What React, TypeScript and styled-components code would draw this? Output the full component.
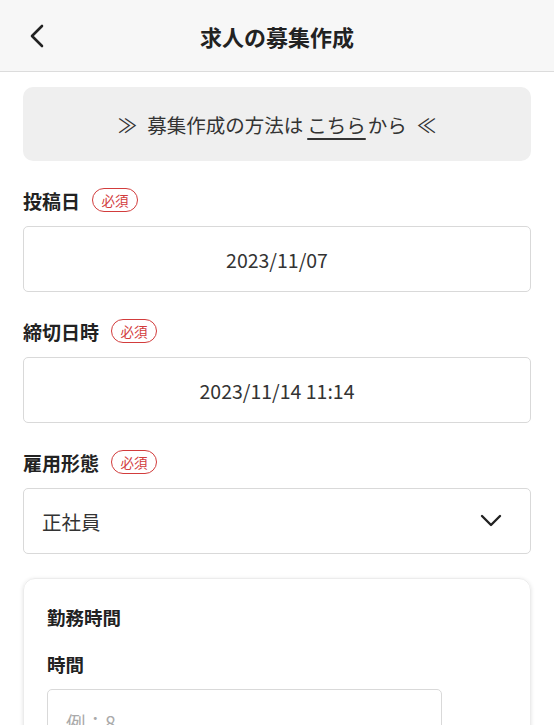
import React from "react";
import styled, { createGlobalStyle } from "styled-components";

const Global = createGlobalStyle`
  html, body { margin: 0; padding: 0; background: #fff; }
  body { font-family: "Noto Sans CJK JP", "Noto Sans", sans-serif; color: #333; }
  * { box-sizing: border-box; }
`;

const Page = styled.div`
  width: 554px;
  height: 725px;
  overflow: hidden;
`;

const Header = styled.header`
  height: 72px;
  background: #f7f7f7;
  border-bottom: 1px solid #dcdcdc;
  display: grid;
  grid-template-columns: 80px 1fr 80px;
  align-items: center;
`;

const BackButton = styled.button`
  border: 0;
  background: none;
  padding: 0 0 0 26px;
  height: 100%;
  display: flex;
  align-items: center;
  color: #222;
`;

const Title = styled.h1`
  margin: 0;
  text-align: center;
  font-size: 22px;
  font-weight: 700;
  color: #222;
`;

const Body = styled.main`
  padding: 15px 23px 0;
  display: flex;
  flex-direction: column;
`;

const Banner = styled.div`
  height: 74px;
  background: #efefef;
  border-radius: 10px;
  display: flex;
  align-items: center;
  justify-content: center;
  font-size: 19.5px;
  color: #333;
`;

const Arrow = styled.span`
  margin: 0 10px;
`;

const Link = styled.a`
  color: #333;
  text-decoration: underline;
  text-decoration-thickness: 1.5px;
  text-underline-offset: 5px;
  margin: 0 2px 0 4px;
`;

const Field = styled.section`
  margin-top: 27px;
  display: flex;
  flex-direction: column;
`;

const LabelRow = styled.div`
  display: flex;
  align-items: center;
  height: 24px;
  gap: 12px;
  margin-bottom: 14px;
`;

const Label = styled.span`
  font-size: 19px;
  font-weight: 700;
  color: #222;
`;

const Badge = styled.span`
  border: 1.5px solid #d23c3c;
  color: #d23c3c;
  border-radius: 12px;
  font-size: 13.5px;
  height: 24px;
  padding: 0 8.5px;
  display: flex;
  align-items: center;
`;

const Box = styled.div<{ $align?: "center" | "left" }>`
  height: 66px;
  border: 1px solid #d9d9d9;
  border-radius: 5px;
  display: flex;
  align-items: center;
  justify-content: ${(p) => (p.$align === "left" ? "space-between" : "center")};
  padding: ${(p) => (p.$align === "left" ? "0 28px 0 18px" : "0")};
  font-size: 19.5px;
  color: #333;
`;

const Card = styled.div`
  margin-top: 24px;
  border-radius: 12px;
  border: 1px solid #ececec;
  box-shadow: 0 1px 4px rgba(0, 0, 0, 0.12);
  padding: 20px 23px 0;
  height: 200px;
`;

const CardTitle = styled.div<{ $gap?: number }>`
  font-size: 18.5px;
  font-weight: 700;
  color: #222;
  height: 36px;
  margin-top: ${(p) => p.$gap ?? 0}px;
  display: flex;
  align-items: center;
`;

const TimeInput = styled.div`
  margin-top: 7px;
  width: 395px;
  height: 66px;
  border: 1px solid #d9d9d9;
  border-radius: 5px;
  padding: 0 0 0 18px;
  display: flex;
  align-items: center;
  font-size: 19.5px;
  color: #aaa;
`;

const Required = () => <Badge>必須</Badge>;

export default function App() {
  return (
    <Page>
      <Global />
      <Header>
        <BackButton aria-label="戻る">
          <svg width="22" height="26" viewBox="0 0 22 26" fill="none">
            <path d="M16 3 L6 13 L16 23" stroke="#222" strokeWidth="2.6" strokeLinecap="round" strokeLinejoin="round" />
          </svg>
        </BackButton>
        <Title>求人の募集作成</Title>
        <span />
      </Header>
      <Body>
        <Banner>
          <Arrow>≫</Arrow>募集作成の方法は<Link>こちら</Link>から<Arrow>≪</Arrow>
        </Banner>
        <Field>
          <LabelRow>
            <Label>投稿日</Label>
            <Required />
          </LabelRow>
          <Box $align="center">2023/11/07</Box>
        </Field>
        <Field>
          <LabelRow>
            <Label>締切日時</Label>
            <Required />
          </LabelRow>
          <Box $align="center">2023/11/14 11:14</Box>
        </Field>
        <Field>
          <LabelRow>
            <Label>雇用形態</Label>
            <Required />
          </LabelRow>
          <Box $align="left">
            <span>正社員</span>
            <svg width="22" height="14" viewBox="0 0 22 14" fill="none">
              <path d="M2 2 L11 11 L20 2" stroke="#222" strokeWidth="2.4" strokeLinecap="round" strokeLinejoin="round" />
            </svg>
          </Box>
        </Field>
        <Card>
          <CardTitle>勤務時間</CardTitle>
          <CardTitle $gap={11}>時間</CardTitle>
          <TimeInput>例：8</TimeInput>
        </Card>
      </Body>
    </Page>
  );
}
